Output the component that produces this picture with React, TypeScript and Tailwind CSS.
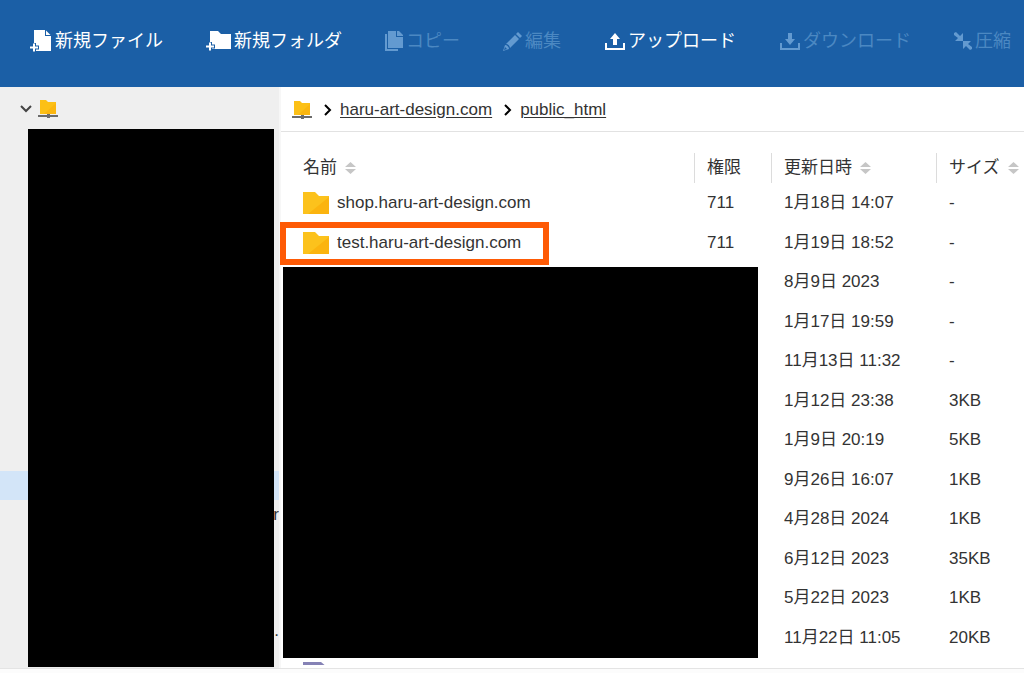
import type { ReactNode } from 'react'
import clsx from 'clsx'

type Tool = { label: string; icon: ReactNode; disabled?: boolean }

const tools: Tool[] = [
  { label: '新規ファイル', icon: <NewFileIcon /> },
  { label: '新規フォルダ', icon: <NewFolderIcon /> },
  { label: 'コピー', icon: <CopyIcon />, disabled: true },
  { label: '編集', icon: <PencilIcon />, disabled: true },
  { label: 'アップロード', icon: <TransferIcon direction="up" /> },
  { label: 'ダウンロード', icon: <TransferIcon direction="down" />, disabled: true },
  { label: '圧縮', icon: <CompressIcon />, disabled: true },
]

const columns = [
  { label: '名前', sortable: true, className: '' },
  { label: '権限', sortable: false, className: 'w-[77px]' },
  { label: '更新日時', sortable: true, className: 'w-[165px]' },
  { label: 'サイズ', sortable: true, className: 'w-[88px]' },
]

const files = [
  { name: 'shop.haru-art-design.com', mode: '711', date: '1月18日 14:07', size: '-' },
  { name: 'test.haru-art-design.com', mode: '711', date: '1月19日 18:52', size: '-', marked: true },
  { date: '8月9日 2023', size: '-' },
  { date: '1月17日 19:59', size: '-' },
  { date: '11月13日 11:32', size: '-' },
  { date: '1月12日 23:38', size: '3KB' },
  { date: '1月9日 20:19', size: '5KB' },
  { date: '9月26日 16:07', size: '1KB' },
  { date: '4月28日 2024', size: '1KB' },
  { date: '6月12日 2023', size: '35KB' },
  { date: '5月22日 2023', size: '1KB' },
  { date: '11月22日 11:05', size: '20KB' },
]

// only the tail of the long names shows beside the masked area
const treeTails = ['', '', '', '', '', '', '', '', '', '', '', '', '', 'r', '', '', '', '.']
const selectedTreeRow = 12

function NewFileIcon() {
  return (
    <svg width="22" height="24" viewBox="0 0 22 24" fill="currentColor" aria-hidden="true">
      <path d="M4 1h11v6h6v15H4z" />
      <path d="M16 1.500 20.500 6H16z" />
      <path d="M4 14v9M-1 18.500h10" stroke="#1b5fa6" strokeWidth="4" />
      <path d="M4 14.500v8M0 18.500h8" stroke="currentColor" strokeWidth="2" />
    </svg>
  )
}

function NewFolderIcon() {
  return (
    <svg width="25" height="24" viewBox="0 0 25 24" fill="currentColor" aria-hidden="true">
      <path d="M4 2h8l3 3h10v15H4z" />
      <path d="M4 13v10M-1 17.500h10" stroke="#1b5fa6" strokeWidth="4" />
      <path d="M4 13.500v8M0 17.500h8" stroke="currentColor" strokeWidth="2" />
    </svg>
  )
}

function CopyIcon() {
  return (
    <svg width="18" height="24" viewBox="0 0 18 24" fill="currentColor" aria-hidden="true">
      <path d="M0 5h2v15h11v2H0z" />
      <path d="M3 2h8v6h7v11H3z" />
      <path d="M12 2h2l4 4v1h-6z" />
    </svg>
  )
}

function PencilIcon() {
  return (
    <svg width="19" height="24" viewBox="0 0 19 24" fill="currentColor" aria-hidden="true">
      <path d="M15 3l4 4-2 2-4-4zM12 6l4 4L7 19c0-2-2-4-4-4z" />
      <path fillRule="evenodd" d="M2 16c2 0 4 2 4 4l-6 2zM2 18l-1 3 3-1z" />
    </svg>
  )
}

function TransferIcon({ direction }: { direction: 'up' | 'down' }) {
  return (
    <svg width="21" height="24" viewBox="0 0 21 24" fill="currentColor" aria-hidden="true">
      <path d="M1 14h2v5h16v-5h2v7H1z" />
      {direction === 'up' ? (
        <path d="M11 4l5 6h-3v6H9v-6H6z" />
      ) : (
        <path d="M9 4h4v6h3l-5 6-5-6h3z" />
      )}
    </svg>
  )
}

function CompressIcon() {
  return (
    <svg width="18" height="24" viewBox="0 0 18 24" fill="currentColor" aria-hidden="true">
      <path d="M0 4l2-1 4 4 3-3v8H1l3-3-4-3z" />
      <path d="M18 20l-2 1-4-4-3 3v-8h8l-3 3 4 3z" />
    </svg>
  )
}

function ServerFolderIcon() {
  return (
    <svg width="20" height="18" viewBox="0 0 20 18" className="shrink-0" aria-hidden="true">
      <path d="M2 0h6l2 2h8v12H2z" fill="#fcc016" />
      <path d="M18 3v11H6z" fill="#fbb60f" />
      <path d="M0 15h20v2H0z" fill="#6b6b6b" />
      <path d="M9 14h3v4H9z" fill="#6b6b6b" />
    </svg>
  )
}

function FolderIcon() {
  return (
    <svg width="26" height="22" viewBox="0 0 26 22" className="shrink-0" aria-hidden="true">
      <path d="M0 0h12l4 4h10v18H0z" fill="#fcc21c" />
      <path d="M26 5v17H5z" fill="#fbb40f" />
    </svg>
  )
}

function SortIcon() {
  return (
    <svg width="11" height="12" viewBox="0 0 11 12" fill="#c6c6c6" aria-hidden="true">
      <path d="M5.500 0 11 5H0zM0 7h11l-5.500 5z" />
    </svg>
  )
}

function Chevron({ className }: { className?: string }) {
  return (
    <svg
      width="12"
      height="12"
      viewBox="0 0 12 12"
      fill="none"
      stroke="currentColor"
      strokeWidth="2"
      className={clsx('shrink-0', className)}
      aria-hidden="true"
    >
      <path d="M3 1l5 5-5 5" />
    </svg>
  )
}

function Toolbar() {
  return (
    <header className="flex h-[87px] shrink-0 gap-[43px] overflow-hidden bg-[#1b5fa6] pl-[30px] pt-[29px] text-white">
      {tools.map((tool) => (
        <button
          key={tool.label}
          type="button"
          disabled={tool.disabled}
          className={clsx(
            'flex h-6 shrink-0 items-center gap-[3px] whitespace-nowrap text-[18px] leading-6',
            tool.disabled && 'text-[#4b88c2] [&>svg]:text-[#639ad0]',
          )}
        >
          {tool.icon}
          {tool.label}
        </button>
      ))}
    </header>
  )
}

function Sidebar() {
  return (
    <aside className="relative w-[281px] shrink-0 overflow-hidden border-r-2 border-[#f7f7f7] bg-[#efefef]">
      <button type="button" aria-label="ルート" className="flex h-9 items-center gap-1.5 pl-5 pt-2">
        <Chevron className="rotate-90 text-[#444]" />
        <ServerFolderIcon />
      </button>
      <ul>
        {treeTails.map((tail, index) => (
          <li
            key={index}
            className={clsx(
              'h-[29px] text-right leading-[29px]',
              index === selectedTreeRow && 'bg-[#d3e5f8]',
            )}
          >
            {tail}
          </li>
        ))}
      </ul>
      <div className="absolute bottom-px left-7 right-[5px] top-[42px] bg-black" />
    </aside>
  )
}

function Breadcrumb() {
  return (
    <nav className="flex h-[45px] items-center gap-1.5 border-b border-[#e2e2e2] pl-[11px] pt-0.5">
      <ServerFolderIcon />
      <Chevron className="ml-1 text-black" />
      <a href="#home" className="underline underline-offset-2">haru-art-design.com</a>
      <Chevron className="ml-1 text-black" />
      <a href="#public" className="underline underline-offset-2">public_html</a>
    </nav>
  )
}

function FileTable() {
  return (
    <table className="mt-[21px] w-full table-fixed text-left">
      <thead>
        <tr>
          {columns.map((column, index) => (
            <th key={column.label} className={clsx('p-0 font-normal', column.className)}>
              <div
                className={clsx(
                  'flex h-[30px] items-center gap-2 whitespace-nowrap',
                  index === 0 ? 'pl-[22px]' : 'border-l border-[#dcdcdc] pl-3',
                )}
              >
                {column.label}
                {column.sortable && <SortIcon />}
              </div>
            </th>
          ))}
        </tr>
      </thead>
      <tbody>
        {files.map((file) => (
          <tr key={file.date} className="whitespace-nowrap odd:h-10 even:h-[39px]">
            <td className="relative p-0 pl-[22px]">
              {file.name && (
                <div className="flex items-center gap-2">
                  <FolderIcon />
                  {file.name}
                </div>
              )}
              {file.marked && (
                <div className="absolute -left-px -top-px z-10 h-[43px] w-[269px] border-[6px] border-[#fe5a05]" />
              )}
            </td>
            <td className="p-0 pl-[13px]">{file.mode}</td>
            <td className="p-0 pl-[13px]">{file.date}</td>
            <td className="p-0 pl-[13px]">{file.size}</td>
          </tr>
        ))}
      </tbody>
    </table>
  )
}

export default function App() {
  return (
    <div className="flex min-h-screen flex-col bg-white font-['Liberation_Sans','Noto_Sans_CJK_JP',sans-serif] text-[17px] leading-6 text-[#333]">
      <Toolbar />
      <div className="flex flex-1">
        <Sidebar />
        <main className="relative min-w-0 flex-1">
          <Breadcrumb />
          <FileTable />
          <div className="h-2 overflow-hidden pl-[22px] pt-1">
            <svg width="26" height="22" viewBox="0 0 26 22" aria-hidden="true">
              <path d="M0 1h18l6 5v16H0z" fill="#8582b5" />
            </svg>
          </div>
          <div className="absolute bottom-2.5 left-0.5 right-[266px] top-[180px] bg-black" />
        </main>
      </div>
      <footer className="h-[5px] border-t border-[#e4e4e4] bg-[#fcfcfc]" />
    </div>
  )
}
